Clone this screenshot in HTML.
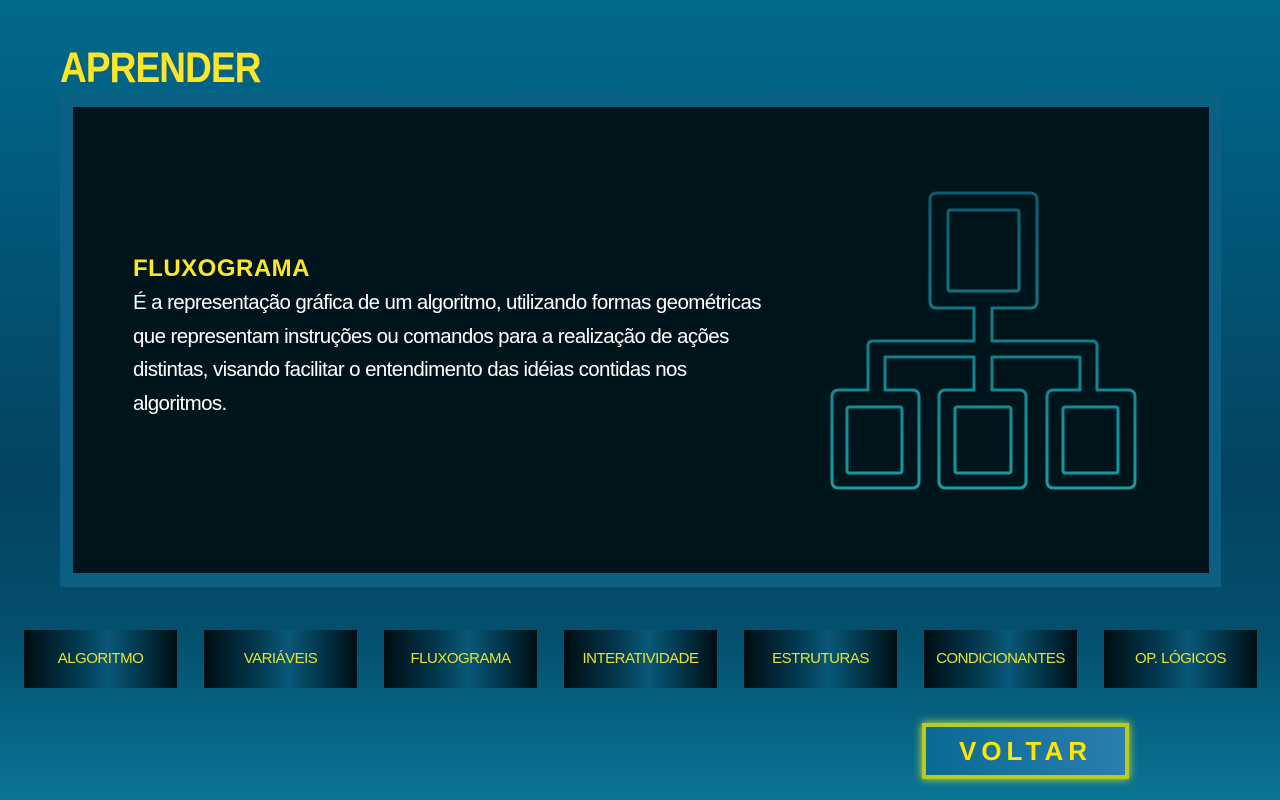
<!DOCTYPE html>
<html><head><meta charset="utf-8"><style>
*{margin:0;padding:0;box-sizing:border-box}
body{width:1280px;height:800px;overflow:hidden;position:relative;font-family:"Liberation Sans",sans-serif;
background:linear-gradient(180deg,#016a8c 0%,#02587a 25%,#03445f 60%,#03506e 80%,#0a7596 100%);}
.t{position:absolute;left:60px;top:43px;color:#ffe52a;font-weight:bold;font-size:43px;letter-spacing:-1px;transform:scaleX(0.86);transform-origin:left;line-height:50px}
.panel{position:absolute;left:60px;top:94px;width:1161px;height:493px;background:#0a5f82}
.inner{position:absolute;left:13px;top:13px;width:1136px;height:466px;background:#00141b}
h2{position:absolute;left:60px;top:148px;color:#ffe52a;font-size:24px;font-weight:bold;letter-spacing:0.5px}
p{position:absolute;left:60px;top:179px;width:650px;color:#fff;font-size:20.5px;line-height:33.5px;letter-spacing:-0.6px}
.btn{position:absolute;top:630px;width:153px;height:58px;background:linear-gradient(90deg,#000d12 0%,#02394f 35%,#0a5878 55%,#02394f 75%,#000d12 100%);color:#ece128;font-size:15px;text-align:center;line-height:58px;letter-spacing:-0.5px}
.v{position:absolute;left:922px;top:723px;width:207px;height:56px;border:4px solid #b8cc1f;background:linear-gradient(90deg,#0a6a94,#2a7eb0);box-shadow:0 0 8px #d4e43a;color:#ffe500;font-weight:bold;font-size:26px;letter-spacing:5px;text-align:center;line-height:48px}
</style></head><body>
<div class="t">APRENDER</div>
<div class="panel"><div class="inner">
<h2>FLUXOGRAMA</h2>
<p>É a representação gráfica de um algoritmo, utilizando formas geométricas que representam instruções ou comandos para a realização de ações distintas, visando facilitar o entendimento das idéias contidas nos algoritmos.</p>
</div></div>
<svg style="position:absolute;left:0;top:0" width="1280" height="800">
<defs><linearGradient id="g" x1="0" y1="190" x2="0" y2="490" gradientUnits="userSpaceOnUse"><stop offset="0" stop-color="#0e5c6e"/><stop offset="1" stop-color="#139ea4"/></linearGradient></defs>
<g fill="none" stroke="url(#g)" stroke-width="3" stroke-linejoin="round">
<path d="M937,193 H1030 Q1037,193 1037,200 V301 Q1037,308 1030,308 H992 V341 H1092 Q1097,341 1097,346 V390 H1128 Q1135,390 1135,397 V481 Q1135,488 1128,488 H1054 Q1047,488 1047,481 V397 Q1047,390 1054,390 H1080 V357 H992 V390 H1019 Q1026,390 1026,397 V481 Q1026,488 1019,488 H946 Q939,488 939,481 V397 Q939,390 946,390 H974 V357 H885 V390 H912 Q919,390 919,397 V481 Q919,488 912,488 H839 Q832,488 832,481 V397 Q832,390 839,390 H868 V346 Q868,341 873,341 H974 V308 H937 Q930,308 930,301 V200 Q930,193 937,193 Z"/>
<rect x="948" y="210" width="71" height="81" rx="2"/>
<rect x="847" y="407" width="55" height="66" rx="2"/>
<rect x="955" y="407" width="56" height="66" rx="2"/>
<rect x="1063" y="407" width="55" height="66" rx="2"/>
</g></svg>
<div class="btn" style="left:24px">ALGORITMO</div>
<div class="btn" style="left:204px">VARIÁVEIS</div>
<div class="btn" style="left:384px">FLUXOGRAMA</div>
<div class="btn" style="left:564px">INTERATIVIDADE</div>
<div class="btn" style="left:744px">ESTRUTURAS</div>
<div class="btn" style="left:924px">CONDICIONANTES</div>
<div class="btn" style="left:1104px">OP. LÓGICOS</div>
<div class="v">VOLTAR</div>
</body></html>
